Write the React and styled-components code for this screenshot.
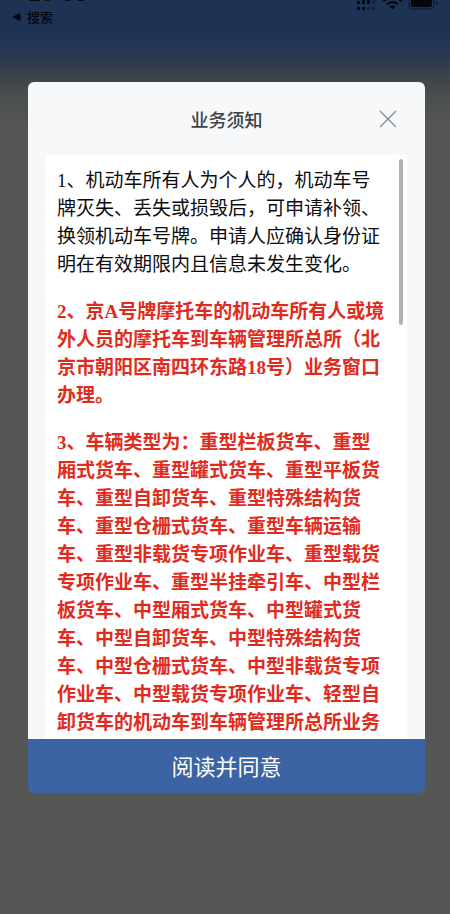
import styled, { createGlobalStyle } from "styled-components";

const GlobalStyle = createGlobalStyle`
  * {
    box-sizing: border-box;
  }

  body {
    margin: 0;
    background-color: #555755;
    font-family: "Noto Sans CJK SC", sans-serif;
  }

  button {
    border: none;
    font-family: inherit;
    cursor: pointer;
  }
`;

const Screen = styled.div`
  display: flex;
  flex-direction: column;
  height: 100vh;
  overflow: hidden;
  background: linear-gradient(
    #1e3254 0px,
    #1f3254 35px,
    #29384f 54px,
    #3c434b 76px,
    #4a4d4f 94px,
    #555755 130px
  );
`;

const StatusBar = styled.header`
  display: flex;
  flex: none;
  justify-content: space-between;
  height: 82px;
  padding: 0 10px 0 12px;
  color: #04070d;
`;

const StatusLeft = styled.div`
  display: flex;
  flex-direction: column;
  margin-top: -18px;
`;

const Clock = styled.time`
  padding-left: 16px;
  font-family: Inter, sans-serif;
  font-size: 20px;
  font-weight: 700;
  line-height: 24px;
`;

const BackLink = styled.a`
  display: flex;
  align-items: center;
  gap: 6px;
  color: inherit;
  font-size: 13px;
  font-weight: 500;
  line-height: 22px;
  text-decoration: none;
`;

const StatusIcons = styled.svg`
  width: 84px;
  height: 12px;
`;

const Dialog = styled.section`
  display: flex;
  flex: 1;
  flex-direction: column;
  min-height: 0;
  margin: 0 25px 121px 28px;
  overflow: hidden;
  border-radius: 6px;
`;

const DialogBody = styled.div`
  display: flex;
  flex: 1;
  flex-direction: column;
  min-height: 0;
  background-color: #f6f8fa;
`;

const DialogHeader = styled.div`
  display: grid;
  grid-template-columns: 30px 1fr 30px;
  flex: none;
  align-items: center;
  height: 73px;
  padding: 0 22px;
`;

const Title = styled.h1`
  grid-column: 2;
  margin: 0;
  color: #3b4446;
  font-size: 18px;
  font-weight: 500;
  line-height: 26px;
  text-align: center;
`;

const CloseButton = styled.button`
  display: flex;
  align-items: center;
  justify-content: center;
  height: 30px;
  padding: 0;
  background: none;
  color: #8b8f92;
`;

const NoticeFrame = styled.div`
  position: relative;
  display: flex;
  flex: 1;
  min-height: 0;
  margin: 0 18px;
  background-color: #fff;
`;

const Notice = styled.div`
  flex: 1;
  padding: 12px 18px 0 11px;
  overflow-y: auto;
  scrollbar-width: none;
`;

const ScrollThumb = styled.span`
  position: absolute;
  top: 4px;
  right: 4px;
  width: 4px;
  height: 166px;
  border-radius: 2px;
  background-color: #b1b1b1;
`;

const Paragraph = styled.p`
  margin: 0 0 19px;
  color: ${({ $important }) => ($important ? "#e02b20" : "#0c0c0c")};
  font-family: "Liberation Serif", "Noto Sans CJK SC", serif;
  font-size: 19px;
  font-weight: ${({ $important }) => ($important ? 700 : 400)};
  line-height: 28px;
`;

const AgreeButton = styled.button`
  flex: none;
  height: 54px;
  padding: 0 0 2px;
  background-color: #3c63a3;
  color: #fff;
  font-size: 22px;
  font-weight: 400;
`;

const paragraphs = [
  {
    id: 1,
    text: "1、机动车所有人为个人的，机动车号牌灭失、丢失或损毁后，可申请补领、换领机动车号牌。申请人应确认身份证明在有效期限内且信息未发生变化。",
  },
  {
    id: 2,
    important: true,
    text: "2、京A号牌摩托车的机动车所有人或境外人员的摩托车到车辆管理所总所（北京市朝阳区南四环东路18号）业务窗口办理。",
  },
  {
    id: 3,
    important: true,
    text: "3、车辆类型为：重型栏板货车、重型厢式货车、重型罐式货车、重型平板货车、重型自卸货车、重型特殊结构货车、重型仓栅式货车、重型车辆运输车、重型非载货专项作业车、重型载货专项作业车、重型半挂牵引车、中型栏板货车、中型厢式货车、中型罐式货车、中型自卸货车、中型特殊结构货车、中型仓栅式货车、中型非载货专项作业车、中型载货专项作业车、轻型自卸货车的机动车到车辆管理所总所业务",
  },
];

function PhoneStatus() {
  return (
    <StatusIcons viewBox="0 0 84 12" aria-hidden="true">
      <g fill="currentColor">
        <rect x="1" y="1" width="3" height="3" />
        <rect x="6" y="-2" width="3" height="6" />
        <rect x="11" y="-4" width="3" height="8" />
        <rect x="16" y="-4" width="3" height="8" opacity="0.35" />
        <rect x="1" y="7" width="3" height="3" />
        <rect x="6" y="7" width="3" height="3" />
        <rect x="11" y="7" width="3" height="3" opacity="0.35" />
        <rect x="16" y="7" width="3" height="3" opacity="0.35" />
        <path d="M33.6 6.6a4.6 4.6 0 0 1 5.8 0L36.5 9.4Z" />
      </g>
      <path
        d="M30.8 4.2a8.6 8.6 0 0 1 11.4 0M27.5 1.2a13 13 0 0 1 18 0"
        fill="none"
        stroke="currentColor"
        strokeWidth="2.2"
      />
      <rect x="53" y="-4" width="25" height="13" rx="3.5" fill="none" stroke="currentColor" opacity="0.6" />
      <rect x="55" y="-2" width="21" height="9" rx="2" fill="currentColor" />
      <path d="M80 1v4q2-1 2-2t-2-2" fill="currentColor" opacity="0.6" />
    </StatusIcons>
  );
}

function App() {
  return (
    <>
      <GlobalStyle />
      <Screen>
        <StatusBar>
          <StatusLeft>
            <Clock>20:08</Clock>
            <BackLink href="#search">
              <svg width="9" height="8" viewBox="0 0 9 8" aria-hidden="true">
                <path d="M1 4 8 0.5v7Z" fill="currentColor" stroke="currentColor" strokeLinejoin="round" />
              </svg>
              搜索
            </BackLink>
          </StatusLeft>
          <PhoneStatus />
        </StatusBar>
        <Dialog role="dialog" aria-labelledby="notice-title">
          <DialogBody>
            <DialogHeader>
              <Title id="notice-title">业务须知</Title>
              <CloseButton type="button" aria-label="关闭">
                <svg width="18" height="18" viewBox="0 0 18 18" aria-hidden="true">
                  <path d="M1 1 17 17M17 1 1 17" fill="none" stroke="currentColor" strokeWidth="1.4" />
                </svg>
              </CloseButton>
            </DialogHeader>
            <NoticeFrame>
              <Notice>
                {paragraphs.map(({ id, important, text }) => (
                  <Paragraph key={id} $important={important}>
                    {text}
                  </Paragraph>
                ))}
              </Notice>
              <ScrollThumb />
            </NoticeFrame>
          </DialogBody>
          <AgreeButton type="button">阅读并同意</AgreeButton>
        </Dialog>
      </Screen>
    </>
  );
}

export default App;
